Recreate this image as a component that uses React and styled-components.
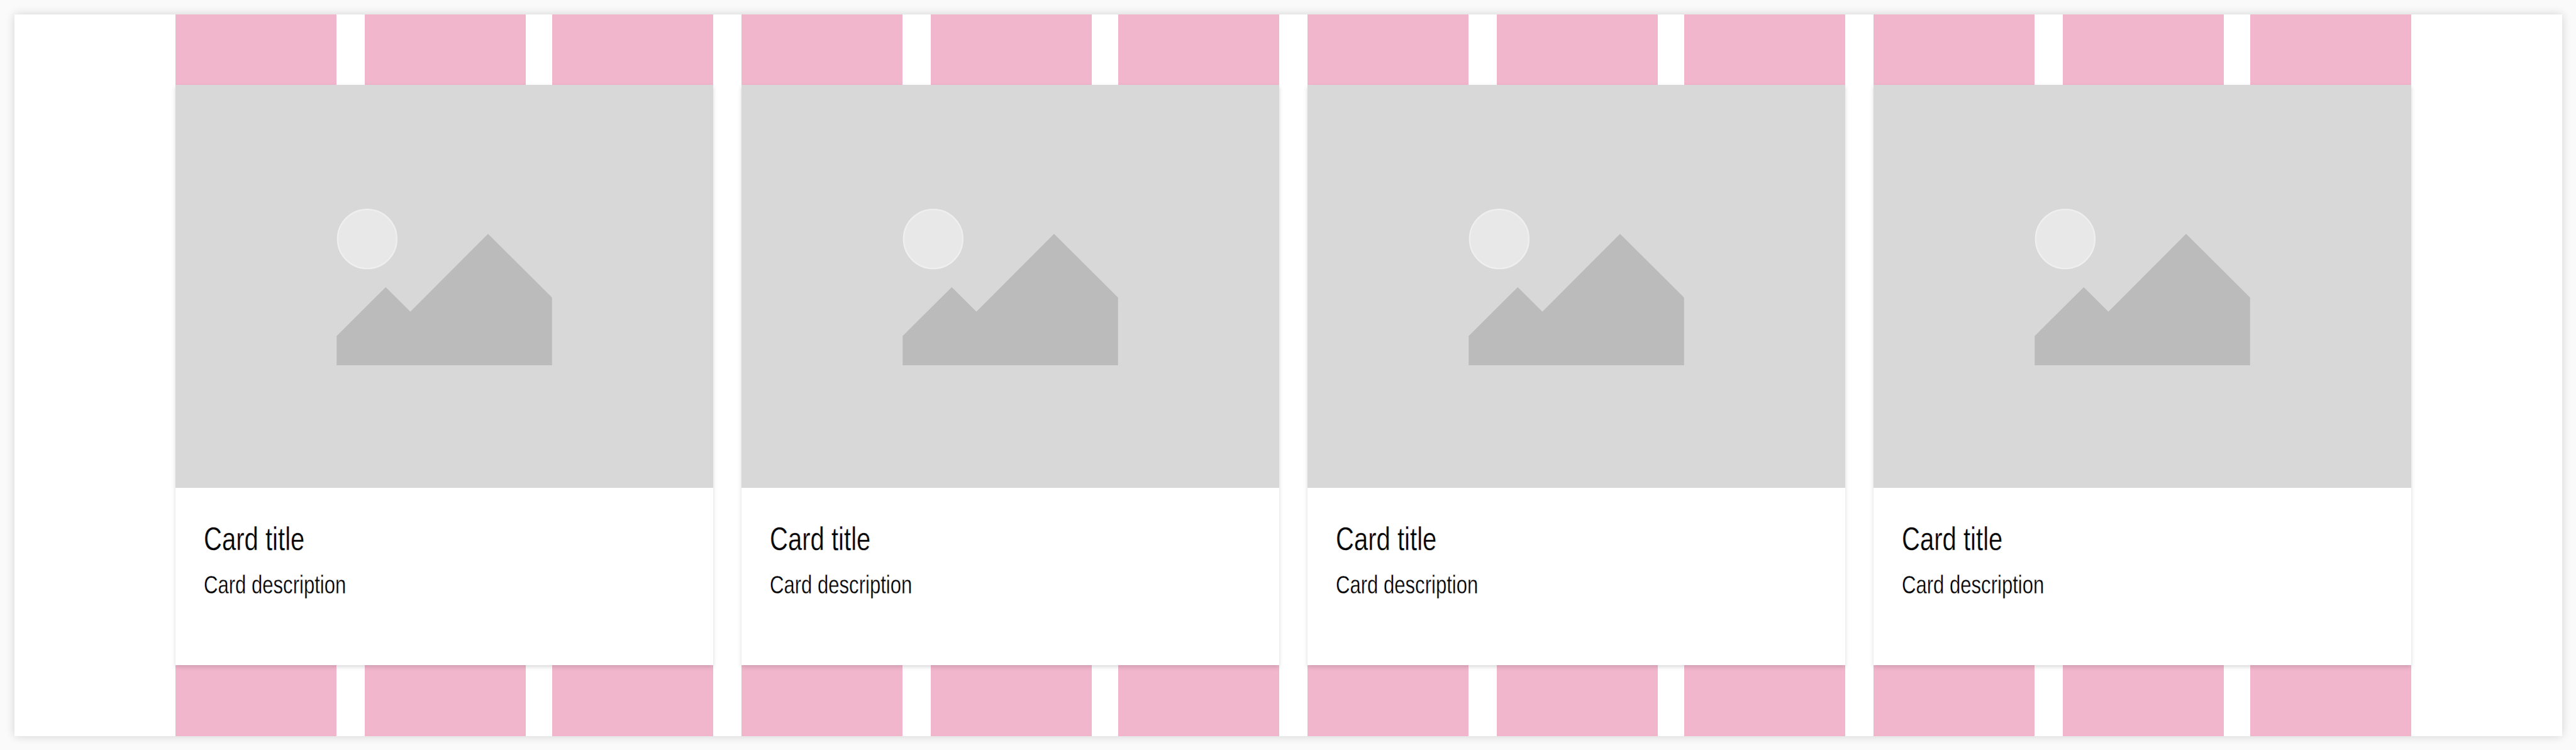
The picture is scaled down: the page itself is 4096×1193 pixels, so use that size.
import React from 'react';
import styled, { createGlobalStyle } from 'styled-components';

const px = (n) => `${((n * 4096) / 4368).toFixed(3)}px`;

const GlobalStyle = createGlobalStyle`
  html, body { margin: 0; background: #fafafa; overflow: hidden; }
  *, *::before, *::after { box-sizing: border-box; }
`;

const Page = styled.main`
  width: 100vw;
  height: 100vh;
  padding: ${px(24)};
  background: #fafafa;
  display: flex;
`;

const Panel = styled.section`
  flex: 1;
  display: grid;
  grid-template: 100% / 100%;
  padding: 0 ${px(255)} 0 ${px(273)};
  background: #ffffff;
  box-shadow: 0 0 ${px(15)} rgba(0, 0, 0, 0.16);
`;

const Columns = styled.div`
  grid-area: 1 / 1;
  display: grid;
  grid-template-columns: repeat(4, 1fr);
  column-gap: ${px(48)};
`;

const ColumnGroup = styled.div`
  display: flex;
  justify-content: space-between;
`;

const Column = styled.div`
  width: ${px(273)};
  background: #f2b6cc;

  &:first-child {
    margin-right: ${px(3)};
  }
`;

const Cards = styled.div`
  grid-area: 1 / 1;
  display: grid;
  grid-template-columns: repeat(4, 1fr);
  column-gap: ${px(48)};
  padding: ${px(120)} 0;
`;

const CardBox = styled.article`
  display: flex;
  flex-direction: column;
  background: #ffffff;
  box-shadow: 0 ${px(3)} ${px(7)} rgba(0, 0, 0, 0.15);
`;

const Media = styled.svg`
  display: block;
  width: 100%;
  height: ${px(684)};
  background: #d8d8d8;
`;

const Body = styled.div`
  flex: 1;
  display: flex;
  flex-direction: column;
  align-items: flex-start;
  padding: ${px(54)} ${px(48)};
  color: #000000;
  font-family: "Liberation Sans", Arial, sans-serif;
  white-space: nowrap;
  -webkit-text-stroke: 0.35px #ffffff;
`;

const Title = styled.h2`
  margin: 0;
  font-size: ${px(55.5)};
  line-height: ${px(66)};
  font-weight: 400;
  transform: scaleX(0.77);
  transform-origin: left;
`;

const Description = styled.p`
  margin: ${px(14)} 0 0;
  font-size: ${px(42.5)};
  line-height: ${px(60)};
  transform: scaleX(0.78);
  transform-origin: left;
`;

const Placeholder = () => (
  <Media viewBox="0 0 912 684" preserveAspectRatio="none">
    <circle cx="325.1" cy="261.4" r="50.2" fill="#e8e8e8" stroke="#efefef" strokeWidth="2.4" />
    <path d="M273.3 426 L356.5 343 L398.3 384.7 L530 252.8 L638.5 360.7 V475.7 H273.3 Z" fill="#bbbbbb" />
  </Media>
);

const cards = Array.from({ length: 4 }, () => ({
  title: 'Card title',
  description: 'Card description',
}));

export default function App() {
  return (
    <Page>
      <GlobalStyle />
      <Panel>
        <Columns>
          {cards.map((_, i) => (
            <ColumnGroup key={i}>
              <Column />
              <Column />
              <Column />
            </ColumnGroup>
          ))}
        </Columns>
        <Cards>
          {cards.map((card, i) => (
            <CardBox key={i}>
              <Placeholder />
              <Body>
                <Title>{card.title}</Title>
                <Description>{card.description}</Description>
              </Body>
            </CardBox>
          ))}
        </Cards>
      </Panel>
    </Page>
  );
}
